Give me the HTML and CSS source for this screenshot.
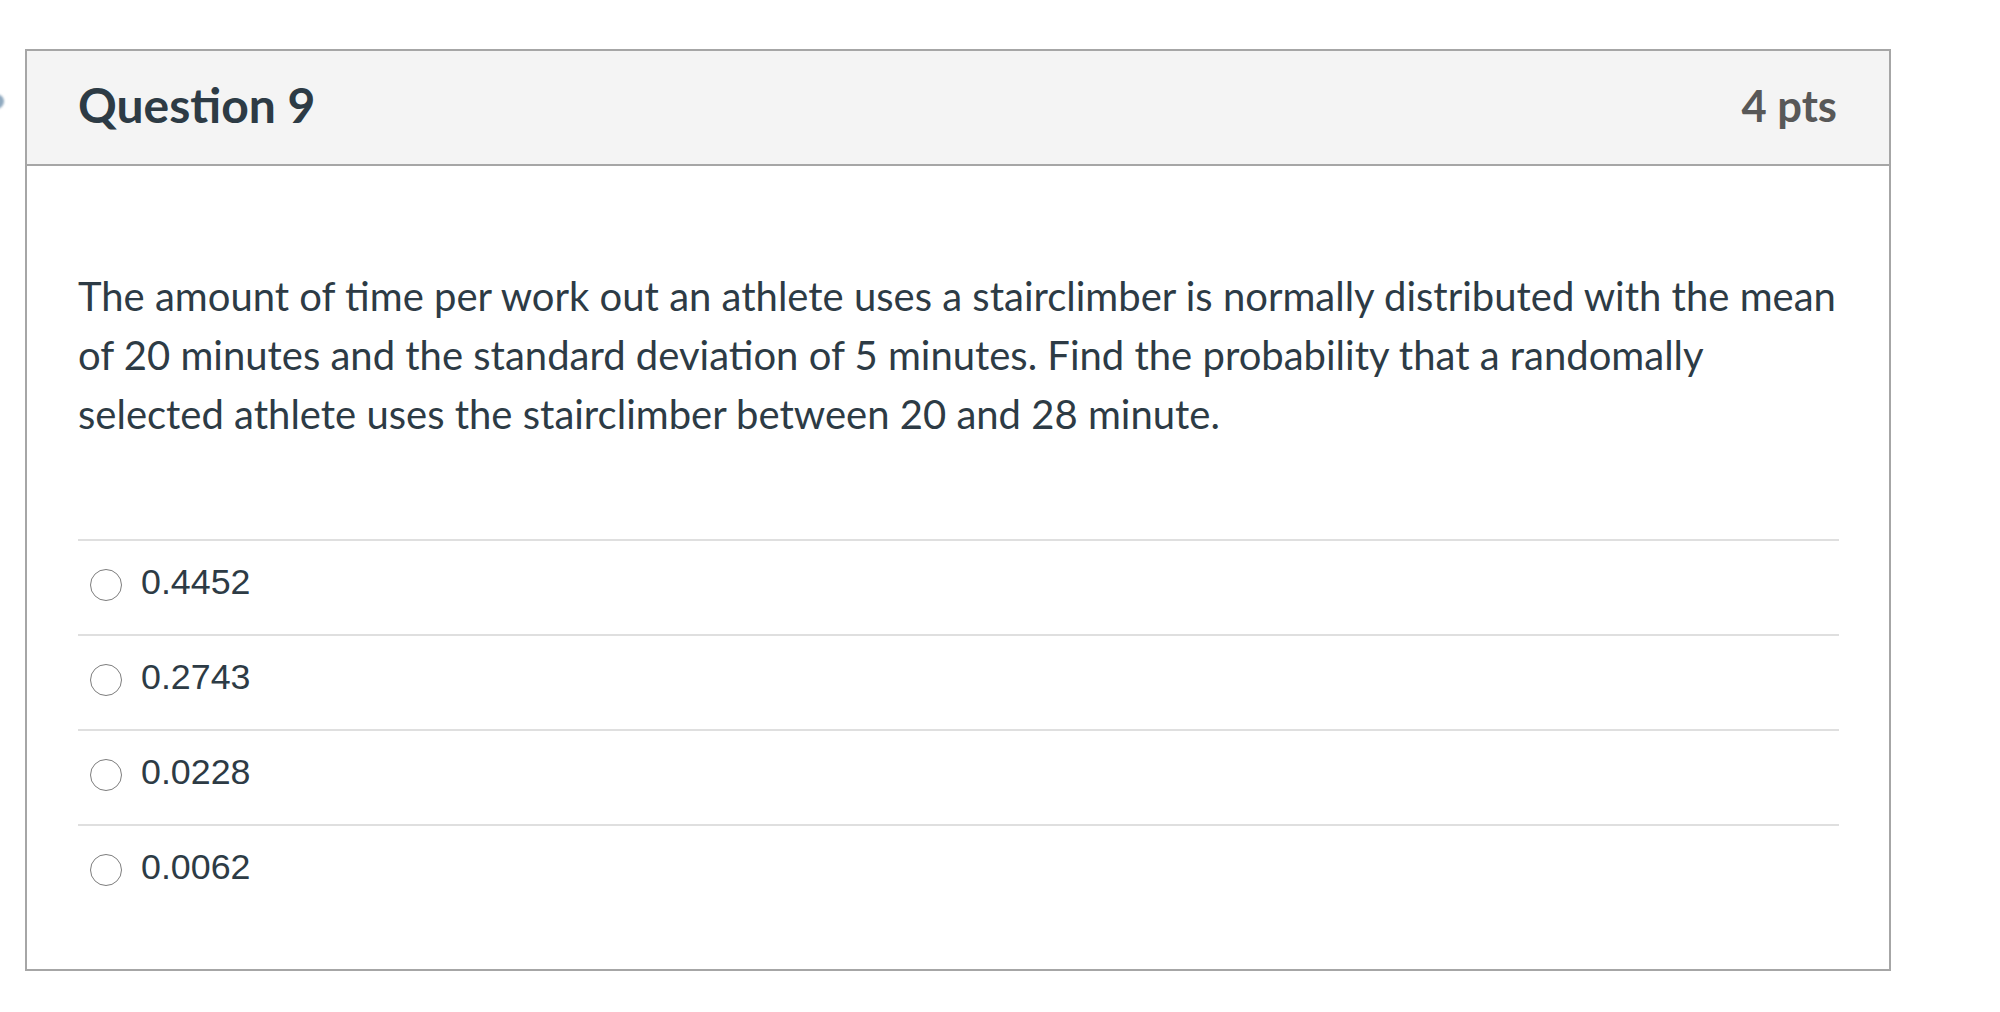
FILE: index.html
```html
<!DOCTYPE html>
<html lang="en">
<head>
<meta charset="utf-8">
<title>Question 9</title>
<link rel="stylesheet" href="styles.css">
</head>
<body>
<span class="edge-marker"></span>
<div class="question">
  <div class="q-header">
    <span class="q-name">Question 9</span>
    <span class="q-points">4 pts</span>
  </div>
  <div class="q-body">
    <p class="q-text">The amount of time per work out an athlete uses a stairclimber is normally distributed with the mean of 20 minutes and the standard deviation of 5 minutes. Find the probability that a randomally selected athlete uses the stairclimber between 20 and 28 minute.</p>
    <div class="answers">
      <label class="answer"><span class="radio"></span><span class="answer-text">0.4452</span></label>
      <label class="answer"><span class="radio"></span><span class="answer-text">0.2743</span></label>
      <label class="answer"><span class="radio"></span><span class="answer-text">0.0228</span></label>
      <label class="answer"><span class="radio"></span><span class="answer-text">0.0062</span></label>
    </div>
  </div>
</div>
</body>
</html>
```
FILE: styles.css
```css
* { box-sizing: border-box; }
html, body {
  margin: 0;
  padding: 0;
  background: #ffffff;
}
body {
  font-family: Lato, "Noto Sans", sans-serif;
  color: #2d3b45;
  padding-top: 49px;
  padding-left: 25px;
  position: relative;
  width: 2000px;
  height: 1012px;
  overflow: hidden;
}
.edge-marker {
  position: absolute;
  left: -11px;
  top: 94px;
  width: 15px;
  height: 15px;
  border-radius: 50%;
  background: #8fa9bf;
  filter: blur(1px);
}
.question {
  width: 1866px;
  border: 2px solid #a6a6a6;
  background: #ffffff;
}
.q-header {
  display: flex;
  justify-content: space-between;
  align-items: center;
  background: #f4f4f4;
  border-bottom: 2px solid #a6a6a6;
  padding: 25px 52px 30px 51px;
}
.q-name {
  font-size: 48px;
  font-weight: 700;
  line-height: 1.2;
  color: #2d3b45;
}
.q-points {
  font-size: 43.5px;
  font-weight: 700;
  line-height: 1.2;
  color: #585858;
}
.q-body {
  padding: 101.5px 50px 50px 51px;
}
.q-text {
  margin: 0 0 95px 0;
  font-size: 40px;
  line-height: 59px;
}
.answers {
  display: flex;
  flex-direction: column;
}
.answer {
  display: flex;
  align-items: flex-start;
  height: 95px;
  border-top: 2px solid #dfdfdf;
  padding-top: 21px;
}
.radio {
  width: 32px;
  height: 32px;
  margin: 7px 19px 0 12px;
  border: 1.3px solid #7d7d7d;
  border-radius: 50%;
  background: #ffffff;
  flex: none;
}
.answer-text {
  font-family: "Liberation Sans", Arial, sans-serif;
  font-size: 35.8px;
  line-height: 1.149;
  color: #2d3b45;
}
```
